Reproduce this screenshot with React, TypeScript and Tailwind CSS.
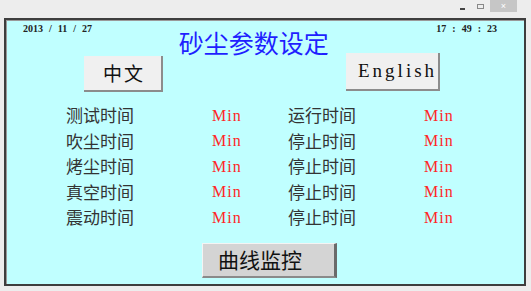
const CJK = "font-['Noto_Sans_CJK_SC',sans-serif]";

const ROWS: [string, string][] = [
  ["测试时间", "运行时间"],
  ["吹尘时间", "停止时间"],
  ["烤尘时间", "停止时间"],
  ["真空时间", "停止时间"],
  ["震动时间", "停止时间"],
];

function Stamp({ parts }: { parts: string[] }) {
  return (
    <div className="flex gap-[6px] font-['Liberation_Serif',serif] text-[10px] leading-[10px] font-bold text-[#222]">
      {parts.map((p, i) => (
        <span key={i}>{p}</span>
      ))}
    </div>
  );
}

export default function App() {
  return (
    <div className="flex h-[291px] w-[531px] flex-col bg-[#ededed]">
      {/* window title bar */}
      <div className="flex h-[18px] items-start justify-end pr-[14px]">
        <div className="mt-[8px] mr-[12px] h-[2px] w-[5px] bg-[#444]" />
        <div className="mt-[4px] mr-[6px] h-[5px] w-[7px] border border-[#888]" />
        <div className="flex h-[12px] w-[27px] items-center justify-center bg-[#c6c6c6] text-[9px] leading-none text-white font-['Liberation_Sans',sans-serif]">
          ×
        </div>
      </div>

      {/* HMI panel */}
      <div className="ml-[4px] mr-[5px] h-[268px] border-2 border-[#3e3e3e] bg-[#c0ffff] shadow-[inset_1px_1px_0_#9a9a9a]">
        {/* header */}
        <div className="flex h-[33px] items-start">
          <div className="mt-[4px] ml-[17px]">
            <Stamp parts={["2013", "/", "11", "/", "27"]} />
          </div>
          <div className="flex flex-1 justify-center pr-[21px]">
            <h1 className={`mt-[10px] text-[25px] leading-[25px] text-[#1f1fff] ${CJK}`}>砂尘参数设定</h1>
          </div>
          <div className="mt-[4px] mr-[27px]">
            <Stamp parts={["17", ":", "49", ":", "23"]} />
          </div>
        </div>

        {/* language buttons */}
        <div className="flex items-start">
          <button
            className={`mt-[3px] ml-[78px] flex h-[36px] w-[79px] items-center justify-center border-r-2 border-b-2 border-[#8c8c8c] bg-[#f0f0f0] pl-[3px] text-[19px] tracking-[2px] text-[#111] ${CJK}`}
          >
            中文
          </button>
          <button className="ml-[183px] flex h-[38px] w-[94px] items-center border-r-2 border-b-2 border-[#8c8c8c] bg-[#f0f0f0] pl-[12px] font-['Liberation_Serif',serif] text-[19px] tracking-[3px] text-[#111]">
            English
          </button>
        </div>

        {/* time settings */}
        <div className="mt-[10px] ml-[60px] grid grid-cols-[146px_76px_136px_auto]">
          {ROWS.map(([a, b], i) => (
            <div key={i} className="contents">
              <div className={`flex h-[25.5px] items-center text-[17px] text-[#333] ${CJK}`}>{a}</div>
              <div className="flex h-[25.5px] items-center pt-[2px] font-['Liberation_Serif',serif] text-[16px] tracking-[1px] text-[#ff2626]">Min</div>
              <div className={`flex h-[25.5px] items-center text-[17px] text-[#333] ${CJK}`}>{b}</div>
              <div className="flex h-[25.5px] items-center pt-[2px] font-['Liberation_Serif',serif] text-[16px] tracking-[1px] text-[#ff2626]">Min</div>
            </div>
          ))}
        </div>

        {/* curve monitor */}
        <button
          className={`mt-[13px] ml-[196px] flex h-[35px] w-[135px] items-center border-t border-l border-[#f4f4f4] border-r-[3px] border-r-[#6a6a6a] border-b-2 border-b-[#8a8a8a] bg-[#d4d4d4] pl-[15px] text-[21px] text-[#111] ${CJK}`}
        >
          曲线监控
        </button>
      </div>
    </div>
  );
}
